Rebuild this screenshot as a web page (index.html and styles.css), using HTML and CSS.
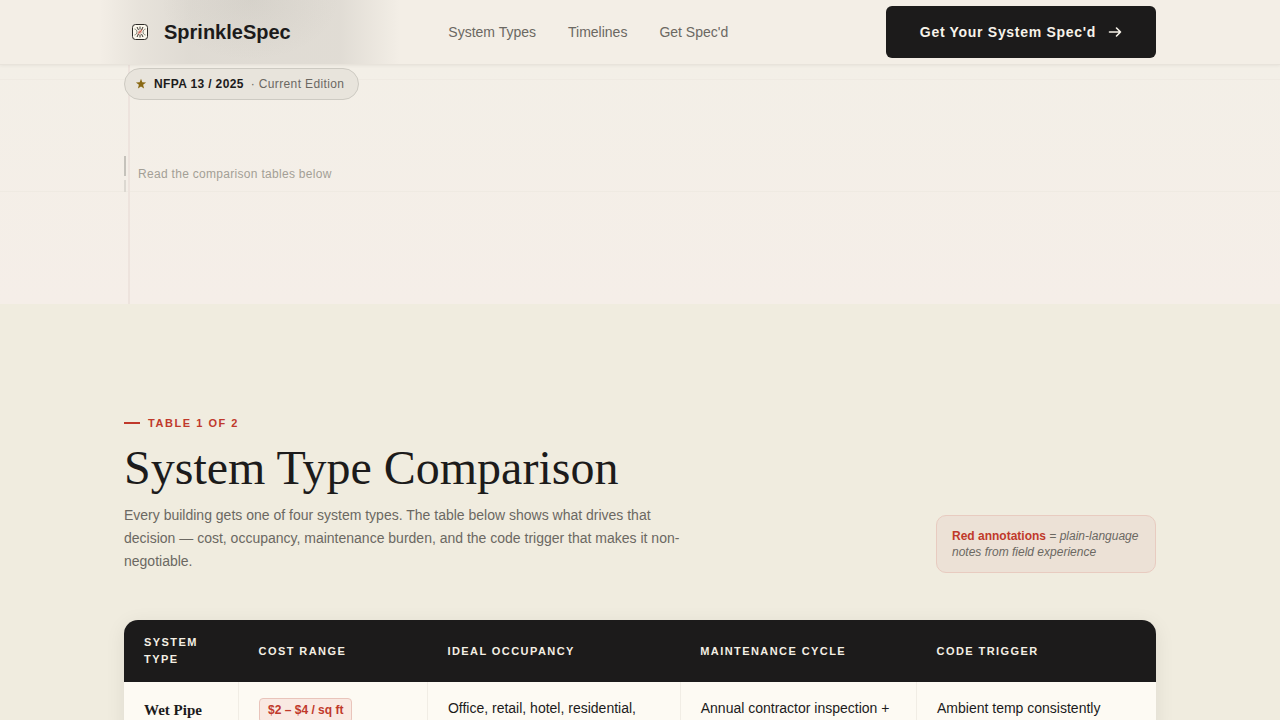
FILE: index.html
```html
<!DOCTYPE html>
<html lang="en">
<head>
  <meta charset="utf-8">
  <meta name="viewport" content="width=device-width, initial-scale=1">
  <title>SprinkleSpec</title>
  <link rel="stylesheet" href="styles.css">
</head>
<body>
  <header class="site-header">
    <div class="container header-inner">
      <a href="#" class="logo">
        <span class="logo-icon">
          <svg width="16" height="16" viewBox="0 0 16 16" fill="none">
            <rect x="0.5" y="0.5" width="15" height="15" rx="3" fill="#fbf7ec" stroke="#2b2926"/>
            <path d="M8 2.5v3M8 10.5v3M5 3l1.5 3M11 3L9.5 6M5 13l1.5-3M11 13l-1.5-3" stroke="#3b3833"/>
            <path d="M2.5 5c1.6.4 2.5 1.5 2.5 3s-.9 2.600-2.500 3M13.500 5C11.900 5.400 11 6.500 11 8s.9 2.600 2.500 3" stroke="#5d6558" stroke-width="0.8"/>
            <circle cx="8" cy="8" r="1.800" fill="#d9a396"/>
            <path d="M5.500 10l5-4.500" stroke="#c0392b" stroke-width="0.8"/>
          </svg>
        </span>
        SprinkleSpec
      </a>
      <nav class="nav">
        <a href="#types">System Types</a>
        <a href="#timelines">Timelines</a>
        <a href="#spec">Get Spec'd</a>
      </nav>
      <a href="#spec" class="btn">
        Get Your System Spec'd
        <svg width="14" height="14" viewBox="0 0 14 14" fill="none" stroke="currentColor" stroke-width="1.6" stroke-linecap="round" stroke-linejoin="round">
          <path d="M1.500 7h11M8.500 3l4 4-4 4"/>
        </svg>
      </a>
    </div>
  </header>

  <section class="hero">
    <div class="container hero-inner">
      <div class="badge">
        <svg width="12" height="12" viewBox="0 0 12 12" fill="#8a6914">
          <path d="M6 .8l1.3 3.5 3.8.2-3 2.3 1 3.7L6 8.4l-3.1 2.1 1-3.700-3-2.300 3.800-.2z"/>
        </svg>
        <strong>NFPA 13 / 2025</strong>
        <span>· Current Edition</span>
      </div>
      <div class="scroll-hint">
        <span class="scroll-line"></span>
        Read the comparison tables below
      </div>
    </div>
  </section>

  <section class="comparison" id="types">
    <div class="container">
      <div class="section-head">
        <div class="section-text">
          <div class="eyebrow">Table 1 of 2</div>
          <h2>System Type Comparison</h2>
          <p>Every building gets one of four system types. The table below shows what drives that decision — cost, occupancy, maintenance burden, and the code trigger that makes it non-negotiable.</p>
        </div>
        <aside class="note"><strong>Red annotations</strong> = plain-language notes from field experience</aside>
      </div>

      <div class="table-wrap">
        <table>
          <colgroup>
            <col class="col-type">
            <col class="col-cost">
            <col class="col-use">
            <col class="col-care">
            <col>
          </colgroup>
          <thead>
            <tr>
              <th scope="col">System Type</th>
              <th scope="col">Cost Range</th>
              <th scope="col">Ideal Occupancy</th>
              <th scope="col">Maintenance Cycle</th>
              <th scope="col">Code Trigger</th>
            </tr>
          </thead>
          <tbody>
            <tr>
              <td class="type">Wet Pipe</td>
              <td><span class="cost">$2 – $4 / sq ft</span></td>
              <td>Office, retail, hotel, residential,</td>
              <td>Annual contractor inspection +</td>
              <td>Ambient temp consistently</td>
            </tr>
          </tbody>
        </table>
      </div>
    </div>
  </section>
</body>
</html>
```
FILE: styles.css
```css
*, *::before, *::after {
  box-sizing: border-box;
}

:root {
  --ink: #1c1b1b;
  --muted: #6b6862;
  --red: #c0392b;
  --cream: #f0ecdf;
}

body {
  margin: 0;
  background: var(--cream);
  color: var(--ink);
  font-family: "Liberation Sans", Arial, sans-serif;
  font-size: 14px;
}

a {
  color: inherit;
  text-decoration: none;
}

.container {
  max-width: 1080px;
  margin: 0 auto;
  padding: 0 24px;
}

/* Header */
.site-header {
  position: sticky;
  top: 0;
  z-index: 10;
  background: #f3eee6;
  border-bottom: 1px solid #e8e3db;
  box-shadow: 0 1px 3px rgba(28, 27, 27, 0.05);
}

.header-inner {
  display: flex;
  align-items: center;
  justify-content: space-between;
  height: 64px;
  background:
    radial-gradient(ellipse 90px 60px at 150px 0, rgba(90, 90, 85, 0.07), transparent),
    linear-gradient(90deg, transparent, rgba(90, 90, 85, 0.08) 40px, rgba(90, 90, 85, 0.13) 90px, rgba(90, 90, 85, 0.12) 240px, transparent 300px);
}

.logo {
  display: flex;
  align-items: center;
  gap: 8px;
  font-size: 20px;
  font-weight: bold;
}

.logo-icon {
  display: flex;
  align-items: center;
  justify-content: center;
  width: 32px;
  height: 32px;
}

.nav {
  display: flex;
  gap: 32px;
  color: var(--muted);
}

.btn {
  display: flex;
  align-items: center;
  gap: 12px;
  height: 52px;
  padding: 0 34px;
  border-radius: 6px;
  background: var(--ink);
  color: #f7f3ea;
  font-size: 14px;
  font-weight: bold;
  letter-spacing: 0.05em;
}

/* Hero */
.hero {
  background:
    linear-gradient(#efeae2, #efeae2) 0 14px / 100% 1px no-repeat,
    linear-gradient(#efeae2, #efeae2) 0 126px / 100% 1px no-repeat,
    linear-gradient(#f3efe7, #f5eee8);
}

.hero-inner {
  padding-top: 3px;
  padding-bottom: 112px;
  background: linear-gradient(#ede3dd, #ede3dd) 28px 0 / 2px 100% no-repeat;
}

.badge {
  display: inline-flex;
  align-items: center;
  height: 32px;
  padding: 0 14px 0 10px;
  border: 1px solid #cdcac2;
  border-radius: 16px;
  background: #e8e4dc;
  font-size: 12px;
  letter-spacing: 0.03em;
}

.badge strong {
  margin: 0 7px;
}

.badge span {
  color: var(--muted);
}

.scroll-hint {
  display: flex;
  align-items: center;
  gap: 12px;
  margin-top: 56px;
  color: #a39f96;
  font-size: 12px;
  letter-spacing: 0.025em;
}

.scroll-line {
  width: 2px;
  height: 36px;
  background: linear-gradient(#c5c2bb 20px, transparent 20px, transparent 24px, #dcd8d1 24px);
}

/* Comparison section */
.comparison {
  padding: 112px 0;
}

.section-head {
  display: flex;
  align-items: flex-end;
  justify-content: space-between;
  margin-bottom: 47px;
}

.section-text {
  max-width: 560px;
}

.eyebrow {
  display: flex;
  align-items: center;
  gap: 8px;
  color: var(--red);
  font-size: 11px;
  font-weight: bold;
  line-height: 14px;
  letter-spacing: 0.14em;
  text-transform: uppercase;
}

.eyebrow::before {
  content: "";
  width: 16px;
  height: 2px;
  background: var(--red);
}

h2 {
  margin: 12px 0 10px;
  font-family: "Liberation Serif", "Times New Roman", serif;
  font-size: 48px;
  font-weight: normal;
  line-height: 52px;
}

.section-text p {
  margin: 0;
  color: var(--muted);
  line-height: 23px;
}

.note {
  width: 220px;
  padding: 12px 15px;
  border: 1px solid #e8cbc0;
  border-radius: 10px;
  background: #ece1d6;
  color: var(--muted);
  font-size: 12px;
  font-style: italic;
  line-height: 16px;
}

.note strong {
  color: var(--red);
  font-style: normal;
}

/* Table */
.table-wrap {
  overflow: hidden;
  border-radius: 14px;
  background: #fdfaf3;
  box-shadow: 0 4px 20px rgba(28, 27, 27, 0.08);
}

table {
  width: 100%;
  border-collapse: collapse;
  table-layout: fixed;
}

.col-type {
  width: 11.1%;
}

.col-cost {
  width: 18.3%;
}

.col-use {
  width: 24.5%;
}

.col-care {
  width: 22.9%;
}

th {
  padding: 14px 20px;
  background: var(--ink);
  color: #f4efe4;
  font-size: 11px;
  line-height: 17px;
  letter-spacing: 0.13em;
  text-align: left;
  text-transform: uppercase;
}

td {
  padding: 16px 20px;
  border-right: 1px solid #f1ede5;
  line-height: 21px;
  vertical-align: top;
  white-space: nowrap;
}

td:last-child {
  border-right: 0;
}

.type {
  font-family: "Liberation Serif", "Times New Roman", serif;
  font-size: 15px;
  font-weight: bold;
  line-height: 24px;
}

.cost {
  display: inline-block;
  padding: 1px 8px;
  border: 1px solid #e9c4bb;
  border-radius: 4px;
  background: #f9e9e2;
  color: var(--red);
  font-size: 12px;
  font-weight: bold;
}
```
